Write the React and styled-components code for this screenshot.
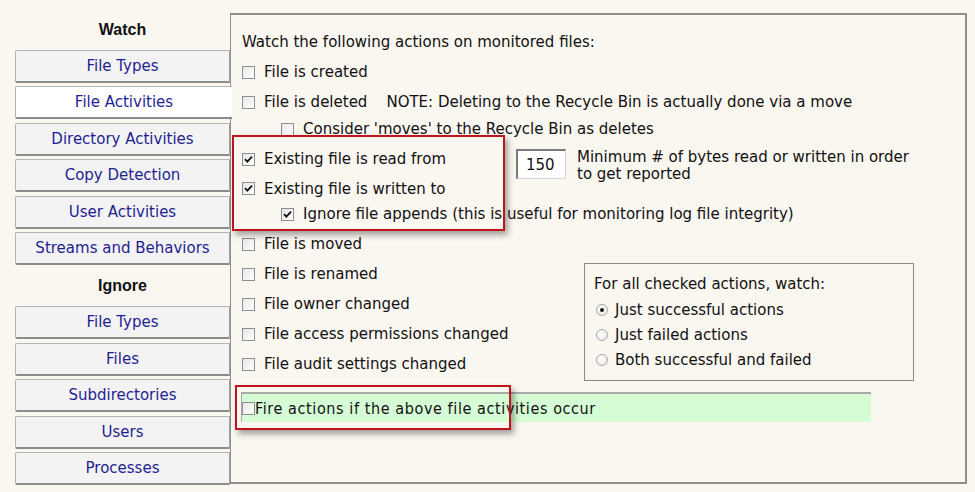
import React from "react";
import styled, { createGlobalStyle } from "styled-components";

const Global = createGlobalStyle`
  html, body { margin: 0; padding: 0; background: #faf6f0; }
  body { width: 975px; height: 492px; overflow: hidden; font-family: "DejaVu Sans", Verdana, sans-serif; }
`;

const Page = styled.div`
  display: flex;
  align-items: flex-start;
  padding: 12px 0 0 15px;
  height: 492px;
  box-sizing: border-box;
`;

const Sidebar = styled.div`
  width: 215px;
  display: flex;
  flex-direction: column;
  position: relative;
  z-index: 2;
`;

const Heading = styled.div`
  height: 36px;
  margin-bottom: ${(p) => p.$mb || 2}px;
  display: flex;
  align-items: center;
  justify-content: center;
  font-family: "Liberation Sans", Arial, sans-serif;
  font-weight: bold;
  font-size: 16px;
  color: #111;
`;

const Tab = styled.div`
  height: 33px;
  margin-bottom: 3.4px;
  box-sizing: border-box;
  display: flex;
  align-items: center;
  justify-content: center;
  font-size: 15px;
  color: #1f1f94;
  background: ${(p) => (p.$active ? "#ffffff" : "#f3f3f3")};
  border: 1px solid #b4b4b4;
  border-bottom: 2px solid #8c8c8c;
  border-right: ${(p) => (p.$active ? "none" : "1px solid #a0a0a0")};
  width: ${(p) => (p.$active ? "217px" : "215px")};
  border-radius: 2px 0 0 2px;
`;

const Panel = styled.div`
  position: relative;
  margin-top: 1px;
  width: 737px;
  height: 471px;
  box-sizing: border-box;
  border: 2px solid #8e8d89;
  border-left: 1px solid #8e8d89;
  padding: 12px 0 0 11px;
  font-size: 15px;
  color: #111;
`;

const Title = styled.div`
  height: 30px;
  display: flex;
  align-items: center;
`;

const Row = styled.div`
  height: ${(p) => p.$h || 30}px;
  margin-top: ${(p) => p.$mt || 0}px;
  padding-left: ${(p) => (p.$indent ? 39 : 0)}px;
  display: flex;
  align-items: center;
  gap: 9px;
  white-space: nowrap;
`;

const Note = styled.span`
  margin-left: 10px;
`;

const BoxWrap = styled.span`
  width: 13px;
  height: 13px;
  box-sizing: border-box;
  border: 1px solid #8f8f8f;
  background: linear-gradient(135deg, #e6e6e6, #ffffff);
  display: inline-flex;
  align-items: center;
  justify-content: center;
  flex: none;
`;

const Check = ({ checked }) => (
  <BoxWrap>
    {checked && (
      <svg width="9" height="9" viewBox="0 0 9 9">
        <path d="M1 4.2 L3.3 6.6 L8 1.6" fill="none" stroke="#111" strokeWidth="1.8" />
      </svg>
    )}
  </BoxWrap>
);

const TwoCol = styled.div`
  display: flex;
  align-items: flex-start;
`;

const LeftCol = styled.div`
  width: ${(p) => p.$w}px;
  flex: none;
  display: flex;
  flex-direction: column;
`;

const BytesArea = styled.div`
  margin-top: 5px;
  display: flex;
  align-items: flex-start;
  gap: 11px;
`;

const NumInput = styled.div`
  width: 50px;
  height: 30px;
  box-sizing: border-box;
  background: #fff;
  border: 1px solid #d6d6d6;
  border-top: 2px solid #7a7a7a;
  border-left: 2px solid #7a7a7a;
  padding-left: 8px;
  display: flex;
  align-items: center;
`;

const BytesLabel = styled.div`
  line-height: 17px;
  white-space: nowrap;
`;

const GroupBox = styled.div`
  margin-top: 34px;
  width: 330px;
  height: 118px;
  box-sizing: border-box;
  border: 1px solid #8a8a8a;
  padding: 6px 0 0 9px;
`;

const GroupTitle = styled.div`
  height: 27px;
  display: flex;
  align-items: center;
`;

const RadioRow = styled.div`
  height: 25px;
  display: flex;
  align-items: center;
  gap: 7px;
  padding-left: 2px;
  white-space: nowrap;
`;

const RadioCircle = styled.span`
  width: 12px;
  height: 12px;
  box-sizing: border-box;
  border-radius: 50%;
  border: 1px solid #a8a8a8;
  background: radial-gradient(circle at 35% 35%, #ffffff, #e4e4e4);
  display: inline-flex;
  align-items: center;
  justify-content: center;
  flex: none;
  &::after {
    content: "";
    width: 4px;
    height: 4px;
    border-radius: 50%;
    background: ${(p) => (p.$on ? "#111" : "transparent")};
  }
`;

const FireBar = styled.div`
  margin-top: 11px;
  margin-left: -1px;
  width: 630px;
  height: 30px;
  box-sizing: border-box;
  background: #d5fcd5;
  border-top: 2px solid #a9a9a9;
  border-left: 1px solid #a9a9a9;
  display: flex;
  align-items: center;
  gap: 0px;
  font-family: "DejaVu Sans Condensed", "DejaVu Sans", sans-serif;
  font-stretch: condensed;
  font-size: 16px;
  letter-spacing: 0.6px;
  white-space: nowrap;
`;

const Highlight = styled.div`
  position: absolute;
  left: ${(p) => p.$x}px;
  top: ${(p) => p.$y}px;
  width: ${(p) => p.$w}px;
  height: ${(p) => p.$h}px;
  box-sizing: border-box;
  border: 2px solid #c0141c;
  box-shadow: 3px 4px 6px rgba(0, 0, 0, 0.35);
  pointer-events: none;
`;

const watchTabs = ["File Types", "File Activities", "Directory Activities", "Copy Detection", "User Activities", "Streams and Behaviors"];
const ignoreTabs = ["File Types", "Files", "Subdirectories", "Users", "Processes"];

export default function App() {
  return (
    <>
      <Global />
      <Page>
        <Sidebar>
          <Heading $mb={2}>Watch</Heading>
          {watchTabs.map((t, i) => (
            <Tab key={t} $active={i === 1}>{t}</Tab>
          ))}
          <Heading $mb={0}>Ignore</Heading>
          {ignoreTabs.map((t) => (
            <Tab key={t}>{t}</Tab>
          ))}
        </Sidebar>
        <Panel>
          <Title>Watch the following actions on monitored files:</Title>
          <Row><Check />File is created</Row>
          <Row><Check />File is deleted<Note>NOTE: Deleting to the Recycle Bin is actually done via a move</Note></Row>
          <Row $indent $mt={-3}><Check />Consider 'moves' to the Recycle Bin as deletes</Row>
          <TwoCol>
            <LeftCol $w={274}>
              <Row><Check checked />Existing file is read from</Row>
              <Row $h={29}><Check checked />Existing file is written to</Row>
            </LeftCol>
            <BytesArea>
              <NumInput>150</NumInput>
              <BytesLabel>Minimum # of bytes read or written in order<br />to get reported</BytesLabel>
            </BytesArea>
          </TwoCol>
          <Row $indent $mt={-4}><Check checked />Ignore file appends (this is useful for monitoring log file integrity)</Row>
          <TwoCol>
            <LeftCol $w={342}>
              <Row><Check />File is moved</Row>
              <Row><Check />File is renamed</Row>
              <Row><Check />File owner changed</Row>
              <Row><Check />File access permissions changed</Row>
              <Row><Check />File audit settings changed</Row>
            </LeftCol>
            <GroupBox>
              <GroupTitle>For all checked actions, watch:</GroupTitle>
              <RadioRow><RadioCircle $on />Just successful actions</RadioRow>
              <RadioRow><RadioCircle />Just failed actions</RadioRow>
              <RadioRow><RadioCircle />Both successful and failed</RadioRow>
            </GroupBox>
          </TwoCol>
          <FireBar><Check />Fire actions if the above file activities occur</FireBar>
          <Highlight $x={1} $y={120} $w={273} $h={96} />
          <Highlight $x={4} $y={370} $w={276} $h={45} />
        </Panel>
      </Page>
    </>
  );
}
